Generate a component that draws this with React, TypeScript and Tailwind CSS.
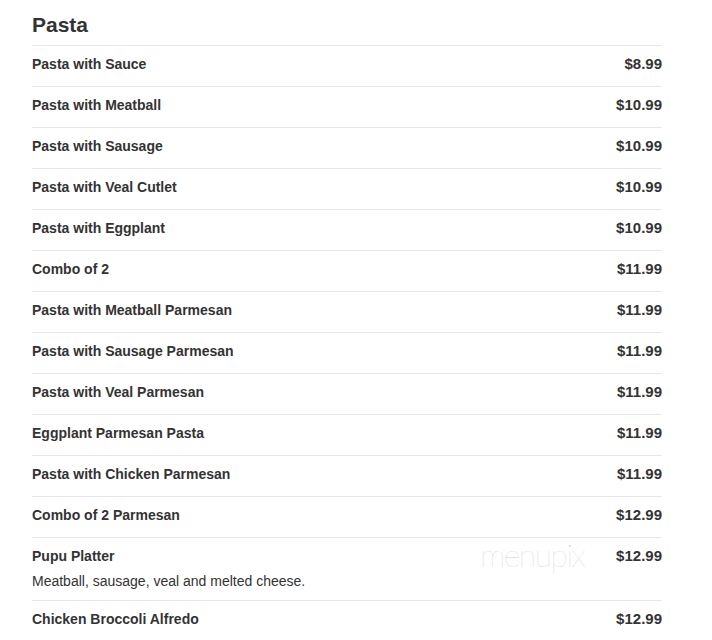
const items: { name: string; price: string; desc?: string }[] = [
  { name: "Pasta with Sauce", price: "$8.99" },
  { name: "Pasta with Meatball", price: "$10.99" },
  { name: "Pasta with Sausage", price: "$10.99" },
  { name: "Pasta with Veal Cutlet", price: "$10.99" },
  { name: "Pasta with Eggplant", price: "$10.99" },
  { name: "Combo of 2", price: "$11.99" },
  { name: "Pasta with Meatball Parmesan", price: "$11.99" },
  { name: "Pasta with Sausage Parmesan", price: "$11.99" },
  { name: "Pasta with Veal Parmesan", price: "$11.99" },
  { name: "Eggplant Parmesan Pasta", price: "$11.99" },
  { name: "Pasta with Chicken Parmesan", price: "$11.99" },
  { name: "Combo of 2 Parmesan", price: "$12.99" },
  {
    name: "Pupu Platter",
    price: "$12.99",
    desc: "Meatball, sausage, veal and melted cheese.",
  },
  { name: "Chicken Broccoli Alfredo", price: "$12.99" },
];

export default function App() {
  return (
    <div className="min-h-screen bg-white text-[#333] font-['Liberation_Sans',Arial,sans-serif]">
      <div className="ml-8 w-[630px]">
        <h2 className="pt-[13px] pb-[8px] text-[21px] leading-[24px] font-bold">Pasta</h2>

        {items.map((item, i) => (
          <div key={i} className="relative border-t border-[#e6e6e6] pt-[9px] pb-[13px]">
            <div className="flex justify-between items-baseline leading-[18px] font-bold">
              <span className="text-[14px]">{item.name}</span>
              <span className="text-[15px]">{item.price}</span>
            </div>
            {item.desc && (
              <p className="mt-[7px] -mb-[3px] text-[14px] leading-[18px]">{item.desc}</p>
            )}
            {/* watermark */}
            {item.desc && (
              <span className="absolute left-[448px] top-[-3px] text-[32px] leading-[40px] tracking-[-1.5px] font-thin text-[#cfcfcf] font-['Lato',sans-serif] select-none">
                menupix
              </span>
            )}
          </div>
        ))}
      </div>
    </div>
  );
}
